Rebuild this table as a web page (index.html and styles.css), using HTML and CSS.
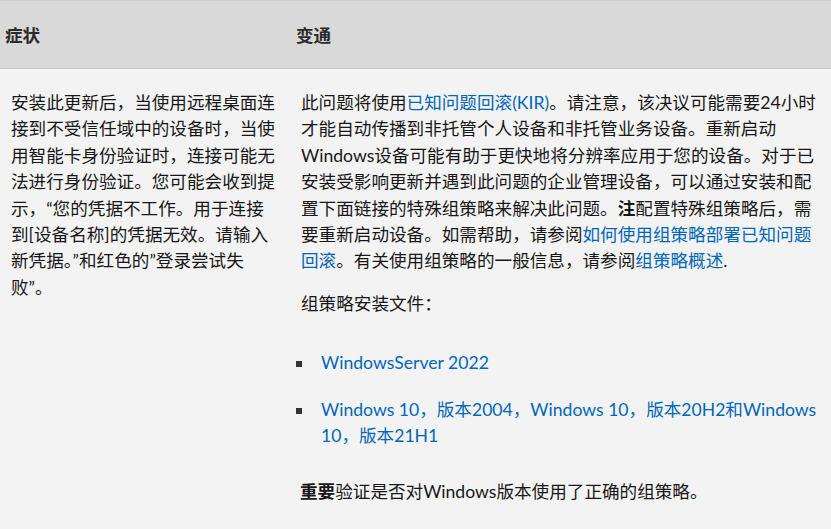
FILE: index.html
```html
<!DOCTYPE html>
<html lang="zh-CN">
<head>
<meta charset="utf-8">
<title>症状与变通</title>
<link rel="stylesheet" href="styles.css">
</head>
<body>
<div class="table">
  <div class="th th-left">症状</div>
  <div class="th th-right">变通</div>
  <div class="td td-left">
    <p>安装此更新后，当使用远程桌面连接到不受信任域中的设备时，当使用智能卡身份验证时，连接可能无法进行身份验证。您可能会收到提示，“您的凭据不工作。用于连接到[设备名称]的凭据无效。请输入新凭据。”和红色的”登录尝试失败”。</p>
  </div>
  <div class="td td-right">
    <p>此问题将使用<a href="#">已知问题回滚(KIR)</a>。请注意，该决议可能需要24小时才能自动传播到非托管个人设备和非托管业务设备。重新启动Windows设备可能有助于更快地将分辨率应用于您的设备。对于已安装受影响更新并遇到此问题的企业管理设备，可以通过安装和配置下面链接的特殊组策略来解决此问题。<strong>注</strong>配置特殊组策略后，需要重新启动设备。如需帮助，请参阅<a href="#">如何使用组策略部署已知问题回滚</a>。有关使用组策略的一般信息，请参阅<a href="#">组策略概述</a>.</p>
    <p>组策略安装文件：</p>
    <ul class="files">
      <li><a href="#">WindowsServer 2022</a></li>
      <li><a href="#">Windows 10，版本2004，Windows 10，版本20H2和Windows 10，版本21H1</a></li>
    </ul>
    <p class="note"><strong>重要</strong>验证是否对Windows版本使用了正确的组策略。</p>
  </div>
</div>
</body>
</html>
```
FILE: styles.css
```css
html, body {
  margin: 0;
  padding: 0;
  background: #f3f3f3;
}
body {
  font-family: Lato, "Noto Sans CJK SC", sans-serif;
  font-size: 17.6px;
  line-height: 26.4px;
  color: #171717;
  min-height: 529px;
}
.table {
  display: grid;
  grid-template-columns: 290px 1fr;
  border-top: 1px solid #cbcbcb;
}
.th {
  background: #d9d9d9;
  border-bottom: 1px solid #c6c6c6;
  font-weight: bold;
  color: #2b2b2b;
  height: 68px;
  display: flex;
  align-items: center;
  padding-top: 3px;
  box-sizing: border-box;
}
.th-left { padding-left: 5px; }
.th-right { padding-left: 6px; }
.td {
  padding: 21px 11px 0 11px;
}
.td p {
  margin: 0 0 16px;
}
a {
  color: #0067b8;
  text-decoration: none;
}
strong { font-weight: bold; }
.files {
  list-style: none;
  margin: 33px 0 30px -5px;
  padding: 0;
}
.files li {
  display: flex;
  margin-bottom: 20px;
}
.files li::before {
  content: "";
  flex: none;
  width: 6px;
  height: 6px;
  background: #333;
  margin-top: 11px;
  margin-right: 19px;
}
.note {
  margin-left: -1px !important;
}
```
